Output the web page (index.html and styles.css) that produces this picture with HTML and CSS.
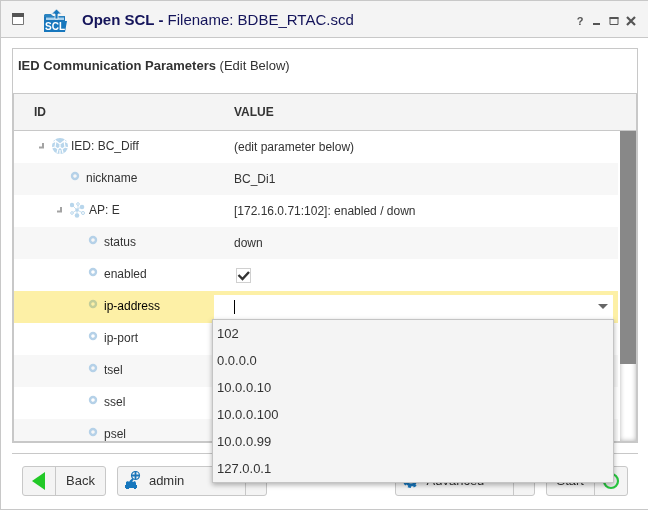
FILE: index.html
```html
<!DOCTYPE html>
<html lang="en">
<head>
  <meta charset="utf-8">
  <title>Open SCL</title>
  <link rel="stylesheet" href="styles.css">
</head>
<body>
  <!-- shared tree icons -->
  <svg class="sprite" aria-hidden="true">
    <symbol id="arrow" viewBox="0 0 18 16">
      <path d="M9 5v4.500H5" fill="none" stroke="#a3a3a3" stroke-width="2"/>
    </symbol>
    <symbol id="dot" viewBox="0 0 16 16">
      <circle cx="5" cy="6" r="3" fill="none" stroke="#b5d1e8" stroke-width="2.4"/>
    </symbol>
    <symbol id="caret" viewBox="0 0 10 6">
      <path d="M0 0h10L5 5z" fill="#666"/>
    </symbol>
  </svg>

  <div class="window">
    <header class="titlebar">
      <button class="icon-btn" aria-label="Window">
        <svg width="12" height="12" viewBox="0 0 12 12"><path d="M.5.5h11v11H.5z" fill="#fff" stroke="#777"/><path d="M0 0h12v4H0z" fill="#555"/></svg>
      </button>
      <svg class="logo" width="24" height="24" viewBox="0 0 24 24">
        <path d="M1 6l1-1h6l2 2h12v4H1z" fill="#2a83c0"/>
        <path d="M1 8h21v15H1z" fill="#1b75b8"/>
        <path d="M3 8.500h18v2.500H3z" fill="#a9d2ee"/>
        <path d="M1 12h23l-2 11H1z" fill="#1777bd"/>
        <path d="M13.500 0l5 5h-3.500v5h-3V5H8.500z" fill="#1777bd" stroke="#f4f4f4" stroke-width=".8"/>
        <text x="12" y="21" class="logo-text">SCL</text>
      </svg>
      <h1><b>Open SCL -</b> Filename: BDBE_RTAC.scd</h1>
      <div class="tools">
        <button class="icon-btn help" aria-label="Help">?</button>
        <button class="icon-btn" aria-label="Minimize"><svg width="10" height="10" viewBox="0 0 10 10"><path d="M1 7h7v2H1z" fill="#555"/></svg></button>
        <button class="icon-btn" aria-label="Maximize"><svg width="10" height="10" viewBox="0 0 10 10"><path d="M1 1.500h8v7H1z" fill="none" stroke="#555"/><path d="M.5 1h9v2h-9z" fill="#555"/></svg></button>
        <button class="icon-btn" aria-label="Close"><svg width="10" height="10" viewBox="0 0 10 10"><path d="M1 1l8 8M9 1L1 9" stroke="#555" stroke-width="2.200"/></svg></button>
      </div>
    </header>

    <main class="panel">
      <h2>IED Communication Parameters <span>(Edit Below)</span></h2>
      <div class="grid">
        <table class="grid-head">
          <thead><tr><th class="id-col" scope="col">ID</th><th scope="col">VALUE</th></tr></thead>
        </table>
        <div class="grid-body">
          <table class="rows">
            <tbody>
              <tr>
                <td class="id-col"><div class="node">
                  <svg class="arrow"><use href="#arrow"/></svg>
                  <svg class="node-icon" viewBox="0 0 16 16">
                    <circle cx="8" cy="8" r="8" fill="#b8d6ec"/>
                    <g fill="none" stroke="#fff" stroke-width="1.200">
                      <path d="M0 5l4-2 4 3 4-3 4 2M3 2l1 1M13 2l-1 1M8 6v3M4 3l-1 6 3 2 2-2 2 2 3-2-1-6M3 9l-3 1M13 9l3 1M6 11l-1 4M10 11l1 4M8 12v4"/>
                    </g>
                  </svg>
                  IED: BC_Diff</div></td>
                <td>(edit parameter below)</td>
              </tr>
              <tr>
                <td class="id-col"><div class="node level-1 leaf"><svg class="dot"><use href="#dot"/></svg>nickname</div></td>
                <td>BC_Di1</td>
              </tr>
              <tr>
                <td class="id-col"><div class="node level-1">
                  <svg class="arrow"><use href="#arrow"/></svg>
                  <svg class="node-icon" viewBox="0 0 16 16">
                    <path d="M2 3l5 5 5-4M7 8v5M7 8l-5 3M7 8l6 3M8 7V2" fill="none" stroke="#c9dfef"/>
                    <g fill="#b8d6ec"><circle cx="2" cy="3" r="2.200"/><circle cx="12" cy="5" r="2.300"/><circle cx="7" cy="13.500" r="2.300"/><circle cx="7" cy="8" r="1.800"/></g>
                    <g fill="#fff" stroke="#b8d6ec"><circle cx="8" cy="2" r="1.300"/><circle cx="2" cy="11" r="1.300"/><circle cx="13" cy="11" r="1.500"/></g>
                  </svg>
                  AP: E</div></td>
                <td>[172.16.0.71:102]: enabled / down</td>
              </tr>
              <tr>
                <td class="id-col"><div class="node level-2 leaf"><svg class="dot"><use href="#dot"/></svg>status</div></td>
                <td>down</td>
              </tr>
              <tr>
                <td class="id-col"><div class="node level-2 leaf"><svg class="dot"><use href="#dot"/></svg><label for="enabled">enabled</label></div></td>
                <td><input type="checkbox" id="enabled" checked></td>
              </tr>
              <tr class="selected">
                <td class="id-col"><div class="node level-2 leaf"><svg class="dot"><use href="#dot"/></svg><label for="ip">ip-address</label></div></td>
                <td class="editor">
                  <div class="combo">
                    <input type="text" id="ip" role="combobox" aria-expanded="true" aria-controls="ip-list">
                    <button class="combo-btn" aria-label="Show addresses"><svg width="10" height="6"><use href="#caret"/></svg></button>
                  </div>
                  <ul class="options" id="ip-list" role="listbox">
                    <li role="option">102</li>
                    <li role="option">0.0.0.0</li>
                    <li role="option">10.0.0.10</li>
                    <li role="option">10.0.0.100</li>
                    <li role="option">10.0.0.99</li>
                    <li role="option">127.0.0.1</li>
                  </ul>
                </td>
              </tr>
              <tr>
                <td class="id-col"><div class="node level-2 leaf"><svg class="dot"><use href="#dot"/></svg>ip-port</div></td>
                <td></td>
              </tr>
              <tr>
                <td class="id-col"><div class="node level-2 leaf"><svg class="dot"><use href="#dot"/></svg>tsel</div></td>
                <td></td>
              </tr>
              <tr>
                <td class="id-col"><div class="node level-2 leaf"><svg class="dot"><use href="#dot"/></svg>ssel</div></td>
                <td></td>
              </tr>
              <tr>
                <td class="id-col"><div class="node level-2 leaf"><svg class="dot"><use href="#dot"/></svg>psel</div></td>
                <td></td>
              </tr>
            </tbody>
          </table>
          <div class="scrollbar"><div class="thumb"></div></div>
        </div>
      </div>
    </main>

    <footer class="toolbar">
      <div class="group">
        <button class="btn">
          <span class="part back-icon"><svg width="14" height="18" viewBox="0 0 14 18"><path d="M0 9L13 0v18z" fill="#22c927"/></svg></span>
          <span class="part">Back</span>
        </button>
        <div class="btn split admin">
          <button class="part main">
            <svg width="16" height="18" viewBox="0 0 16 18">
              <g fill="none" stroke="#1b75b8"><circle cx="10.500" cy="4.500" r="4" stroke-width="1.200"/><path d="M10.500 1v7M7 4.500h7" stroke-width="1.800"/></g>
              <path d="M8 8l-3 3" stroke="#1b75b8" stroke-width="2"/>
              <path d="M1 11l2-1 1 1 2-2 2 2 2-1 1 2v2h1v3h-1v1H9v-1H4v1H1v-1H0v-3h1z" fill="#1777bd"/>
            </svg>
            admin
          </button>
          <button class="part drop" aria-label="Choose user"><svg width="10" height="6"><use href="#caret"/></svg></button>
        </div>
      </div>
      <div class="group">
        <div class="btn split advanced">
          <button class="part main">
            <svg width="16" height="16" viewBox="0 0 16 16">
              <circle cx="8" cy="8" r="5" fill="none" stroke="#1777bd" stroke-width="3"/>
              <circle cx="8" cy="8" r="7" fill="none" stroke="#1777bd" stroke-width="2" stroke-dasharray="3 2.500"/>
            </svg>
            Advanced
          </button>
          <button class="part drop" aria-label="More options"><svg width="10" height="6"><use href="#caret"/></svg></button>
        </div>
        <button class="btn start">
          <span class="part">Start</span>
          <span class="part start-icon"><svg width="18" height="18" viewBox="0 0 18 18"><circle cx="9" cy="9" r="7" fill="none" stroke="#28c840" stroke-width="2.200"/></svg></span>
        </button>
      </div>
    </footer>
  </div>
</body>
</html>
```
FILE: styles.css
```css
* {
  box-sizing: border-box;
}

body {
  margin: 0;
  background: #fff;
  color: #333;
  font-family: "Liberation Sans", Arial, sans-serif;
  font-size: 12px;
}

button {
  border: none;
  padding: 0;
  background: none;
  color: inherit;
  font: inherit;
  cursor: pointer;
}

svg {
  display: block;
  flex: none;
}

.sprite {
  display: none;
}

.window {
  display: flex;
  flex-direction: column;
  height: 100vh;
  min-height: 400px;
  border: 1px solid #c8c8c8;
  border-right: none;
}

/* Title bar */
.titlebar {
  display: flex;
  align-items: center;
  height: 37px;
  padding: 0 12px 0 11px;
  background: #f4f4f4;
  border-bottom: 1px solid #c8c8c8;
}

.titlebar h1 {
  flex: 1;
  margin: 0;
  color: #14145a;
  font-size: 15px;
  font-weight: normal;
}

.logo {
  margin: 4px 15px 0 19px;
}

.logo-text {
  fill: #fff;
  font-size: 10px;
  font-weight: bold;
  text-anchor: middle;
}

.tools {
  display: flex;
  align-items: center;
  gap: 7px;
  padding-top: 3px;
}

.help {
  width: 10px;
  color: #555;
  font-size: 11px;
  font-weight: bold;
}

/* Parameter grid */
.panel {
  display: flex;
  flex: 1;
  flex-direction: column;
  min-height: 0;
  margin: 10px 10px 0 11px;
  border: 1px solid #c8c8c8;
}

.panel h2 {
  margin: 0;
  padding: 9px 5px 19px;
  font-size: 13px;
  line-height: 16px;
}

.panel h2 span {
  font-weight: normal;
}

.grid {
  display: flex;
  flex: 1;
  flex-direction: column;
  min-height: 0;
  border: 1px solid #c8c8c8;
}

table {
  width: 100%;
  table-layout: fixed;
  border-spacing: 0;
}

.id-col {
  width: 200px;
}

th {
  height: 37px;
  padding: 0 20px;
  background: #f4f4f4;
  border-bottom: 1px solid #c8c8c8;
  text-align: left;
}

.grid-body {
  display: flex;
  flex: 1;
  gap: 2px;
  min-height: 0;
  overflow: hidden;
}

.rows {
  flex: 1;
  align-self: flex-start;
}

td {
  height: 32px;
  padding: 0 20px;
}

.rows tr:nth-child(even) {
  background: #f7f7f7;
}

.rows tr.selected {
  background: #fdf0a6;
  color: #000;
}

.node {
  display: flex;
  align-items: center;
  padding-bottom: 2px;
}

.level-1 {
  padding-left: 18px;
}

.level-2 {
  padding-left: 36px;
}

.leaf .dot {
  margin-left: 18px;
}

.arrow {
  width: 18px;
  height: 16px;
}

.dot {
  width: 16px;
  height: 16px;
}

.node-icon {
  width: 16px;
  height: 16px;
  margin-right: 3px;
}

.selected .dot {
  opacity: 0.8;
  mix-blend-mode: multiply;
}

input[type="checkbox"] {
  display: block;
  appearance: none;
  width: 15px;
  height: 15px;
  margin: 0 2px;
  border: 1px solid #d0d0d0;
  background: #fff url("data:image/svg+xml,%3Csvg xmlns='http://www.w3.org/2000/svg' viewBox='0 0 13 13'%3E%3Cpath d='M1.500 6l4 4L12 3' fill='none' stroke='%23333' stroke-width='2.400'/%3E%3C/svg%3E");
}

/* Combo box */
.rows .editor {
  padding: 0 5px 0 0;
}

.combo {
  display: flex;
  align-items: center;
  height: 24px;
  background: #fff;
}

.combo input {
  flex: 1;
  min-width: 0;
  height: 24px;
  padding: 0 20px;
  border: none;
  outline: none;
  /* text cursor */
  background: linear-gradient(#000, #000) 20px 5px / 1px 14px no-repeat;
  font: inherit;
}

.combo-btn {
  padding: 5px;
}

.options {
  position: absolute;
  left: 212px;
  right: 34px;
  margin: 0;
  padding: 0;
  background: #f4f4f4;
  border: 1px solid #c4c4c4;
  box-shadow: 0 2px 5px rgba(0, 0, 0, 0.3);
  color: #333;
  font-size: 13px;
  line-height: 27px;
  list-style: none;
}

.options li {
  padding: 0 4px;
}

.scrollbar {
  width: 16px;
  background: #fff;
  box-shadow: inset 0 0 5px rgba(0, 0, 0, 0.3);
}

.thumb {
  height: 75%;
  background: #888;
}

/* Bottom toolbar */
.toolbar {
  display: flex;
  justify-content: space-between;
  margin: 10px 10px 0 11px;
  padding: 12px 10px 13px;
  border-top: 1px solid #c8c8c8;
}

.group {
  display: flex;
  gap: 11px;
}

.btn {
  display: flex;
  height: 30px;
  background: #f4f4f4;
  border: 1px solid #c8c8c8;
  border-radius: 3px;
  font-size: 13px;
}

.part {
  display: flex;
  align-items: center;
  justify-content: center;
  height: 28px;
  padding: 0 10px 2px;
}

.part + .part {
  border-left: 1px solid #c8c8c8;
}

.back-icon {
  width: 32px;
  padding-bottom: 0;
}

.split .main {
  flex: 1;
  justify-content: flex-start;
  gap: 8px;
  padding: 0 7px 2px;
}

.split .drop {
  width: 21px;
  padding: 0;
}

.admin {
  width: 150px;
}

.advanced {
  width: 140px;
}

.start .start-icon {
  width: 33px;
  padding: 0;
}
```
